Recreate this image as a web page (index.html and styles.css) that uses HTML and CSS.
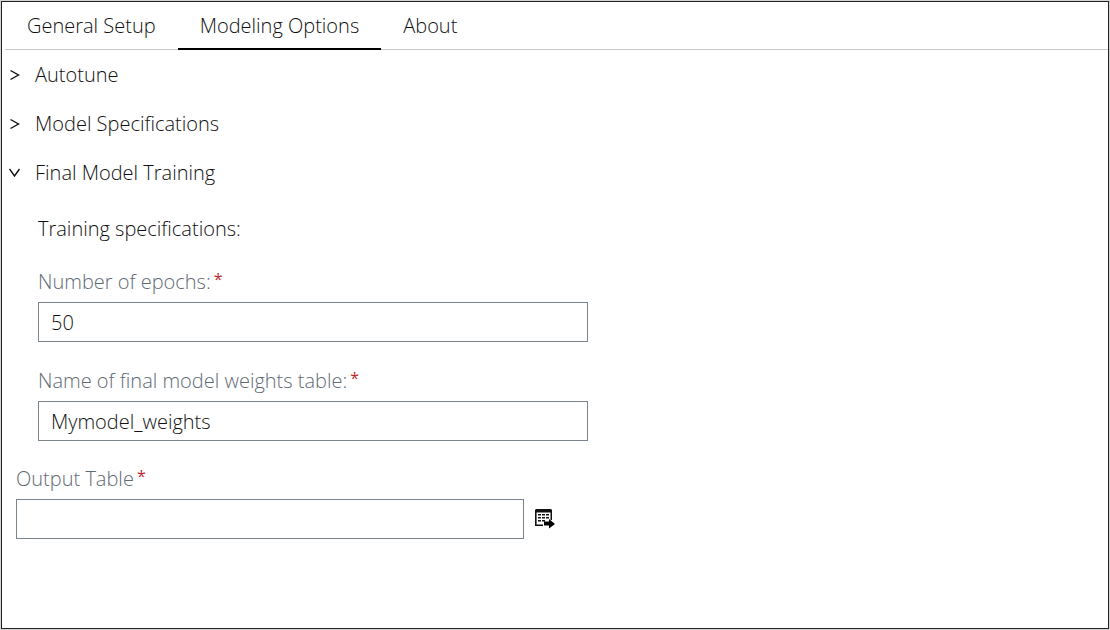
FILE: index.html
```html
<!DOCTYPE html>
<html lang="en">
<head>
<meta charset="utf-8">
<meta name="viewport" content="width=device-width, initial-scale=1">
<title>Modeling Options</title>
<link rel="stylesheet" href="styles.css">
</head>
<body>
<main class="panel">
  <div class="tabs" role="tablist">
    <button class="tab" type="button" role="tab" aria-selected="false">General Setup</button>
    <button class="tab tab-active" type="button" role="tab" aria-selected="true">Modeling Options</button>
    <button class="tab" type="button" role="tab" aria-selected="false">About</button>
  </div>

  <form class="options">
    <details class="section">
      <summary class="section-title">
        <svg class="chevron" viewBox="0 0 12 12" aria-hidden="true"><path d="M1.5 1.5 9.5 6 1.5 10.5"/></svg>
        Autotune
      </summary>
    </details>
    <details class="section">
      <summary class="section-title">
        <svg class="chevron" viewBox="0 0 12 12" aria-hidden="true"><path d="M1.5 1.5 9.5 6 1.5 10.5"/></svg>
        Model Specifications
      </summary>
    </details>
    <details class="section" open>
      <summary class="section-title">
        <svg class="chevron" viewBox="0 0 12 12" aria-hidden="true"><path d="M.5 2 5.5 9 10.5 2"/></svg>
        Final Model Training
      </summary>
      <div class="section-body">
        <p class="subtitle">Training specifications:</p>
        <div class="field">
          <label class="label" for="epochs">Number of epochs:<span class="required">*</span></label>
          <input class="input" id="epochs" type="text" inputmode="numeric" value="50" required>
        </div>
        <div class="field">
          <label class="label" for="weights">Name of final model weights table:<span class="required">*</span></label>
          <input class="input" id="weights" type="text" value="Mymodel_weights" required>
        </div>
      </div>
    </details>

    <div class="field output">
      <label class="label" for="output">Output Table<span class="required">*</span></label>
      <div class="picker">
        <input class="input" id="output" type="text" required>
        <button class="icon-button" type="button" aria-label="Browse tables">
          <svg class="table-icon" viewBox="0 0 20 20" aria-hidden="true">
            <path fill="#111" d="M1 0H16L17 1V11H15.5V3.5H1.6V15.4H8V17H0V1Z"/>
            <path fill="#111" d="M3 5h3v1.5H3zM7 5h3v1.5H7zM11 5h3v1.5h-3zM3 8h3v1.5H3zM7 8h3v1.5H7zM11 8h3v1.5h-3zM3 11h3v1.5H3zM7 11h3v1.5H7z"/>
            <path fill="#000" d="M9 12.5h5V10l6 5-6 4.5v-3H9z"/>
          </svg>
        </button>
      </div>
    </div>
  </form>
</main>
</body>
</html>
```
FILE: styles.css
```css
* {
  box-sizing: border-box;
}

body {
  display: flex;
  min-height: 100vh;
  margin: 0;
  padding: 1px;
  background: #d4d4d4;
  color: #111;
  font: 300 20px/24px "Open Sans", "Noto Sans", sans-serif;
}

button,
input {
  color: inherit;
  font: inherit;
}

.panel {
  flex: 1;
  min-width: 0;
  border: 1px solid #222;
  background: #fff;
}

.tabs {
  display: flex;
  height: 48px;
  margin-left: 3px;
  border-bottom: 1px solid #c8c8c8;
}

.tab {
  height: 48px;
  padding: 2px 22px 0;
  border: 0;
  border-bottom: 2px solid transparent;
  background: none;
}

.tab-active {
  border-bottom-color: #000;
}

.section-title {
  display: flex;
  align-items: center;
  gap: 14px;
  height: 49px;
  padding-left: 7px;
  list-style: none;
  cursor: pointer;
}

.chevron {
  width: 12px;
  height: 12px;
  fill: none;
  stroke: #111;
  stroke-width: 1.4;
}

.section-body {
  display: flex;
  flex-direction: column;
  gap: 27px;
  padding: 20px 36px 0;
}

.subtitle {
  margin: 0 0 2px;
}

.field {
  display: flex;
  flex-direction: column;
  gap: 8px;
}

.label {
  color: #5f6a75;
}

.required {
  margin-left: 3px;
  color: #c0272d;
  font-size: 16px;
  font-weight: 400;
  line-height: 1;
  vertical-align: 4px;
}

.input {
  width: 100%;
  max-width: 550px;
  height: 40px;
  padding: 0 12px;
  border: 1px solid #7c858d;
  border-radius: 0;
  background: #fff;
}

.output {
  padding: 26px 14px 0;
}

.picker {
  display: flex;
  align-items: center;
  gap: 11px;
}

.picker .input {
  max-width: 508px;
}

.icon-button {
  padding: 0;
  border: 0;
  background: none;
}

.table-icon {
  display: block;
  width: 20px;
  height: 20px;
}
```
